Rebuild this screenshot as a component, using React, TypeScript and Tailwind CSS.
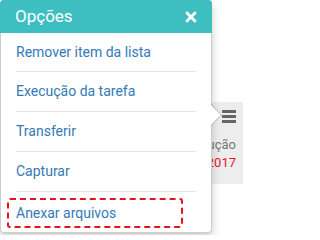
import { FaTimes } from 'react-icons/fa'

const itens = ['Remover item da lista', 'Execução da tarefa', 'Transferir', 'Capturar']

export default function App() {
  return (
    <div className="relative w-[243px] h-[235px] overflow-hidden bg-white font-['Roboto',sans-serif]">
      {/* Tabela por trás */}
      <div className="mt-[102px] flex h-[82px]">
        <div className="flex-1" />
        <div className="w-[32px] bg-[#ededed] flex flex-col items-end pr-[7px]">
          <div className="mt-[8px] flex flex-col gap-[2px] w-[14px]">
            <span className="h-[3px] bg-[#666]" />
            <span className="h-[3px] bg-[#666]" />
            <span className="h-[3px] bg-[#666]" />
          </div>
          <span className="mt-[13px] text-[13px] leading-[18px] text-[#777] whitespace-nowrap">ução</span>
          <span className="text-[13px] leading-[18px] text-[#e8141c]">2017</span>
        </div>
      </div>

      {/* Popover */}
      <div className="absolute left-0 top-0 w-[212px] h-[233px] bg-white border border-black/20 rounded-[4px] shadow-[0_5px_10px_rgba(0,0,0,0.2)]">
        <div className="h-[33px] -mt-px -mx-px pl-[15px] pr-[13px] flex items-center justify-between bg-[#3dbfc1] rounded-t-[4px]">
          <span className="text-[17px] text-white">Opções</span>
          <FaTimes className="text-white w-[16px] h-[16px]" />
        </div>
        <ul className="px-[15px]">
          {itens.map((item, i) => (
            <li
              key={item}
              className={`${i === 0 ? 'h-[39px]' : 'h-[40px]'} flex items-center border-b border-[#e5e5e5] text-[14px] text-[#337ab7]`}
            >
              {item}
            </li>
          ))}
          <li className="pt-[6px]">
            <div className="-ml-[9px] mr-[13px] h-[30px] flex items-center pl-[7px] border-2 border-dashed border-[#e3141c] rounded-[3px] text-[14px] text-[#337ab7]">
              Anexar arquivos
            </div>
          </li>
        </ul>

        {/* Seta */}
        <div className="absolute top-[103px] -right-[11px] w-0 h-0 border-y-[11px] border-y-transparent border-l-[11px] border-l-black/25" />
        <div className="absolute top-[104px] -right-[10px] w-0 h-0 border-y-[10px] border-y-transparent border-l-[10px] border-l-white" />
      </div>
    </div>
  )
}
